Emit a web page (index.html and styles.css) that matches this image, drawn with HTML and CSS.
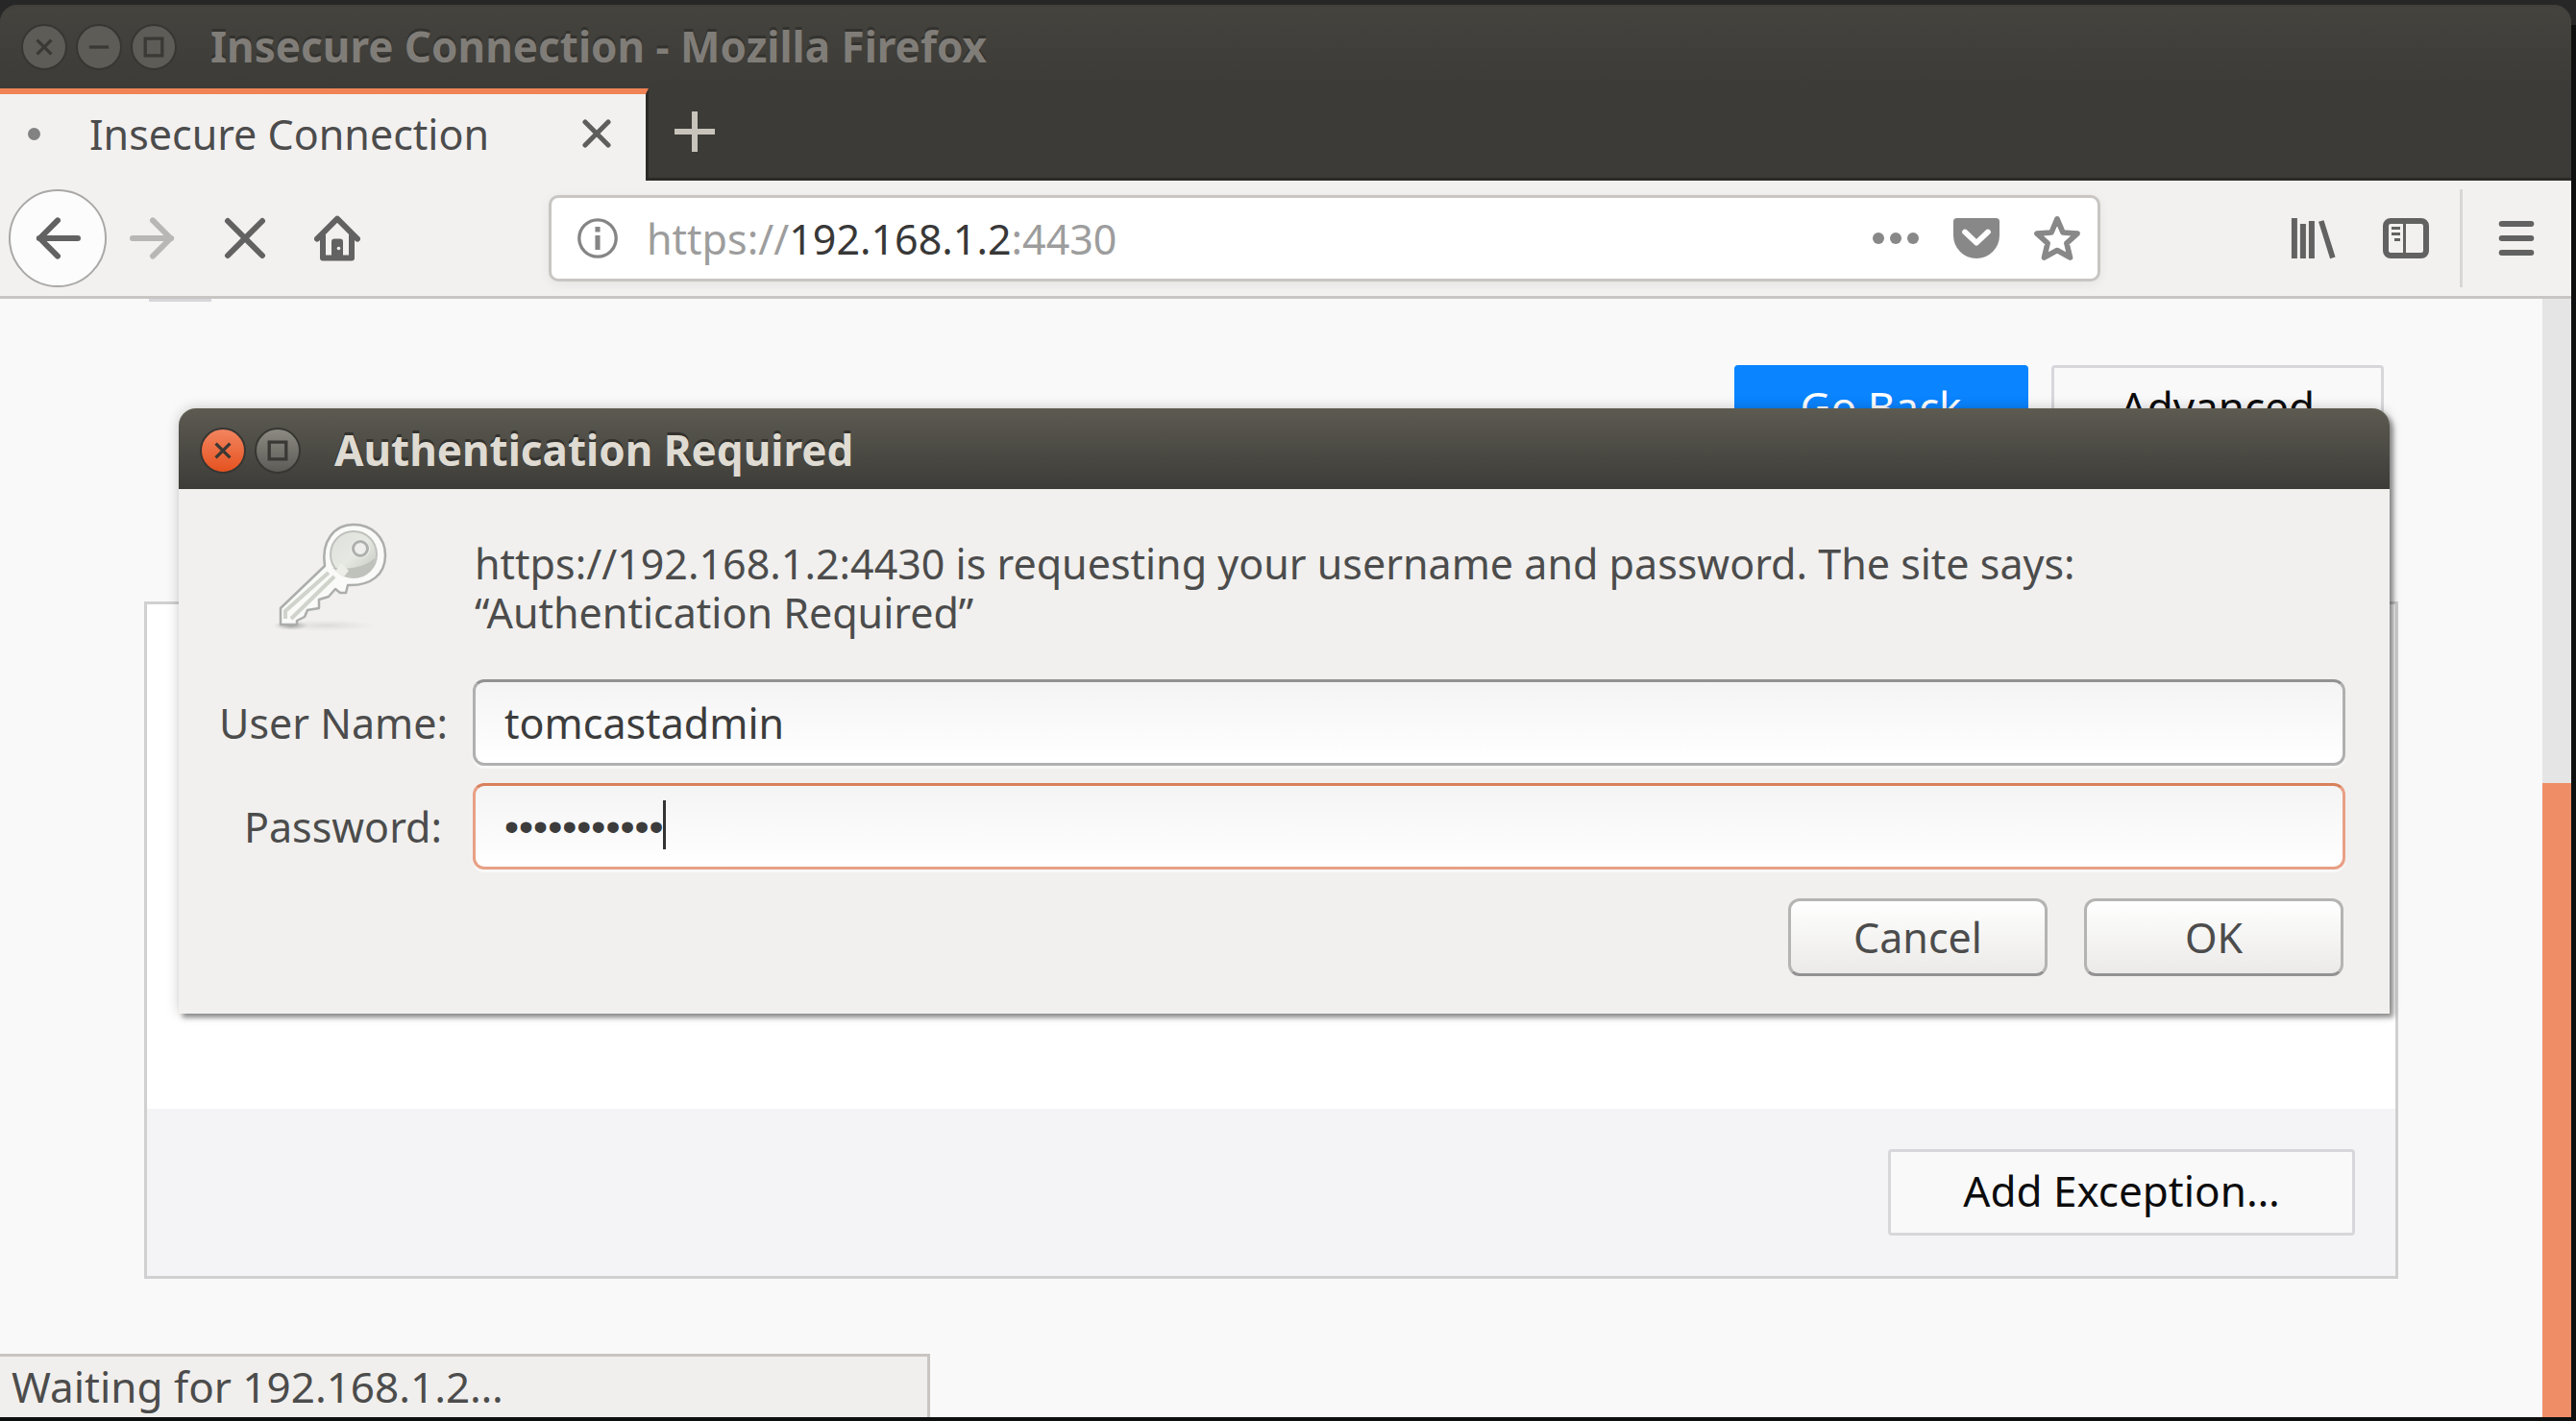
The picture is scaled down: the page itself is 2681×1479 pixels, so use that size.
FILE: index.html
```html
<!DOCTYPE html>
<html lang="en">
<head>
<meta charset="utf-8">
<title>Insecure Connection - Mozilla Firefox</title>
<link rel="stylesheet" href="styles.css">
</head>
<body>
<div class="browser">
  <header class="titlebar">
    <button class="win-btn" type="button" aria-label="Close window"><svg viewBox="0 0 16 16"><path d="M5.3 5.3l5.4 5.4M10.7 5.3l-5.4 5.4"/></svg></button>
    <button class="win-btn" type="button" aria-label="Minimize window"><svg viewBox="0 0 16 16"><path d="M4.3 8h7.4"/></svg></button>
    <button class="win-btn" type="button" aria-label="Maximize window"><svg viewBox="0 0 16 16"><path d="M4.8 4.8h6.4v6.4H4.8z"/></svg></button>
    <h1 class="window-title">Insecure Connection - Mozilla Firefox</h1>
  </header>

  <div class="tabs">
    <div class="tab">
      <span class="tab-busy"></span>
      <span class="tab-label">Insecure Connection</span>
      <button class="icon-btn" type="button" aria-label="Close tab"><svg class="i30" viewBox="0 0 10 10"><path d="M1 1l8 8M9 1L1 9" fill="none" stroke="#5e5e5d" stroke-width="1.7" stroke-linecap="round"/></svg></button>
    </div>
    <div class="tab-rest">
      <button class="icon-btn" type="button" aria-label="New tab"><svg class="i42" viewBox="0 0 14 14"><path d="M7 0v14M0 7h14" fill="none" stroke="#c8c4bb" stroke-width="2"/></svg></button>
    </div>
  </div>

  <nav class="toolbar">
    <button class="icon-btn back" type="button" aria-label="Back"><svg class="i48" viewBox="0 0 16 16"><path d="M15 8H1.6M8 1.8L1.8 8L8 14.2" class="line"/></svg></button>
    <button class="icon-btn forward" type="button" aria-label="Forward" disabled><svg class="i48" viewBox="0 0 16 16"><path d="M1 8h13.4M8 1.8L14.2 8L8 14.2" class="line"/></svg></button>
    <button class="icon-btn" type="button" aria-label="Stop"><svg class="i48" viewBox="0 0 16 16"><path d="M2 2l12 12M14 2L2 14" class="line"/></svg></button>
    <button class="icon-btn" type="button" aria-label="Home"><svg class="i48" viewBox="0 0 16 16"><path d="M1 8.2L8 1.2L15 8.2M3 7v7.8h10V7" class="line"/><path d="M6 15V9.2a1 1 0 0 1 1-1h2a1 1 0 0 1 1 1V15z" fill="#626262"/><circle cx="8.5" cy="11.5" r=".6" fill="#f2f1ef"/></svg></button>
    <div class="urlbar">
      <svg class="i42" viewBox="0 0 14 14"><circle cx="7" cy="7" r="6.4" fill="none" stroke="#858585" stroke-width="1.1"/><path d="M7 3v1.8M7 6v5" stroke="#858585" stroke-width="1.7"/></svg>
      <div class="url" role="textbox" aria-label="Address">https://<b>192.168.1.2</b>:4430</div>
      <button class="icon-btn" type="button" aria-label="Page actions"><svg class="i48" viewBox="0 0 16 16" fill="#888"><circle cx="2" cy="8" r="2"/><circle cx="8" cy="8" r="2"/><circle cx="14" cy="8" r="2"/></svg></button>
      <button class="icon-btn" type="button" aria-label="Save to Pocket"><svg class="i48" viewBox="0 0 16 16"><path d="M1.2 1h13.6a1.2 1.2 0 0 1 1.2 1.2V7a8 8 0 0 1-16 0V2.2a1.2 1.2 0 0 1 1.2-1.2z" fill="#888"/><path d="M4 5.8L8 9.6L12 5.8" fill="none" stroke="#fff" stroke-width="1.9" stroke-linecap="round" stroke-linejoin="round"/></svg></button>
      <button class="icon-btn" type="button" aria-label="Bookmark this page"><svg class="i48" viewBox="0 0 16 16"><path d="M8 1.3L10 6l5 .4-3.7 3.3 1.2 5L8 12.2l-4.5 2.5 1.2-5L1 6.400 6 6z" fill="none" stroke="#888" stroke-width="1.9" stroke-linejoin="round"/></svg></button>
    </div>
    <button class="icon-btn" type="button" aria-label="Library"><svg class="i48" viewBox="0 0 16 16"><path d="M1.3 1v14M4.3 3v12M7.3 2v13" stroke="#626262" stroke-width="2"/><path d="M10.6 2l4 12.8" stroke="#626262" stroke-width="1.9"/></svg></button>
    <button class="icon-btn" type="button" aria-label="Sidebars"><svg class="i48" viewBox="0 0 16 16"><rect x="1" y="2" width="14" height="12" rx="1.7" fill="none" stroke="#626262" stroke-width="2"/><path d="M7.5 2v12M3 4.5h3M3 6.5h3M4 8.5h2" stroke="#626262" stroke-width="1"/></svg></button>
    <span class="toolbar-rule"></span>
    <button class="icon-btn" type="button" aria-label="Open menu"><svg class="i48" viewBox="0 0 16 16"><path d="M2.9 3h10.2M2.9 8h10.2M2.9 13h10.2" stroke="#626262" stroke-width="2" stroke-linecap="round"/></svg></button>
  </nav>

  <div class="viewport">
    <main class="page">
      <div class="rule-end"></div>
      <div class="actions">
        <button class="page-btn primary" type="button">Go Back</button>
        <button class="page-btn" type="button">Advanced</button>
      </div>
      <section class="advanced">
        <div class="advanced-body"></div>
        <div class="advanced-foot"><button class="page-btn exception" type="button">Add Exception…</button></div>
      </section>
    </main>
    <div class="scrollbar"><div class="thumb"></div></div>
    <div class="status">Waiting for 192.168.1.2…</div>
  </div>

  <form class="dialog" role="dialog" aria-labelledby="dialog-title">
    <header class="dialog-bar">
      <button class="win-btn close" type="button" aria-label="Close dialog"><svg viewBox="0 0 16 16"><path d="M5.3 5.3l5.4 5.4M10.7 5.3l-5.4 5.4"/></svg></button>
      <button class="win-btn lit" type="button" aria-label="Maximize dialog"><svg viewBox="0 0 16 16"><path d="M4.8 4.8h6.4v6.4H4.8z"/></svg></button>
      <h2 class="window-title" id="dialog-title">Authentication Required</h2>
    </header>
    <div class="dialog-body">
      <svg class="key" viewBox="0 0 130 130">
        <defs>
          <linearGradient id="metal" x1="0" y1="0" x2="1" y2="1"><stop offset="0" stop-color="#dfe0dc"/><stop offset=".5" stop-color="#e6e8e2"/><stop offset="1" stop-color="#c2c5bd"/></linearGradient>
          <radialGradient id="ground"><stop offset="0" stop-color="#77787a" stop-opacity=".7"/><stop offset="1" stop-color="#999" stop-opacity="0"/></radialGradient>
        </defs>
        <ellipse cx="60" cy="116" rx="52" ry="6" fill="url(#ground)" opacity=".25"/>
        <ellipse cx="23" cy="116" rx="18" ry="5" fill="url(#ground)"/>
        <path d="M58 54C54 28 68 11 88 11c19 0 33 13 33 32 0 20-15 32-39 31l-2 8-6 0-5-4-7 8-10 3v9l-12 2-3 7-8 4v4H12V98z" fill="#fafaf8" stroke="#acaeab" stroke-width="2.5" stroke-linejoin="round"/>
        <circle cx="88" cy="42" r="24" fill="url(#metal)" stroke="#c0c2bd" stroke-width="2"/>
        <path d="M66 56c9 6 14 8 24 10 10-1 20-8 20-20-12 10-26 12-44 10z" fill="#bfc2ba"/>
        <path d="M62 61L17 101v8M68 65L23 109" fill="none" stroke="#d0d3cb" stroke-width="4"/>
        <path d="M75 51l8 8-5 6-9-5z" fill="#edeee8"/>
        <circle cx="95" cy="36" r="10" fill="#eeeeec"/>
        <circle cx="95" cy="36" r="7.5" fill="#eeeeec" stroke="#aeb0ad" stroke-width="3"/>
      </svg>
      <p class="message">https://192.168.1.2:4430 is requesting your username and password. The site says: “Authentication Required”</p>
      <label for="user">User Name:</label>
      <input class="field" id="user" type="text" value="tomcastadmin">
      <label for="pass">Password:</label>
      <div class="secret">
        <input class="field focused" id="pass" type="password" value="tomcastpass">
        <span class="caret"></span>
      </div>
      <div class="dialog-actions">
        <button class="dialog-btn" type="button">Cancel</button>
        <button class="dialog-btn" type="submit">OK</button>
      </div>
    </div>
  </form>
</div>
</body>
</html>
```
FILE: styles.css
```css
* { box-sizing: border-box; }

body {
  margin: 0;
  height: 100vh;
  padding: 5px 5px 4px 0;
  background: linear-gradient(#272727 0 26px, #0e1010 26px);
  font-family: "Noto Sans", sans-serif;
  font-size: 43px;
  line-height: 51px;
  color: #4c4c4c;
  overflow: hidden;
}

button, input { font: inherit; color: inherit; margin: 0; }
svg { display: block; flex: none; }
h1, h2, p { margin: 0; }

.browser {
  position: relative;
  height: 100%;
  display: flex;
  flex-direction: column;
  background: #3c3b37;
  border-radius: 18px 18px 0 0;
}

/* Window frame */
.titlebar, .dialog-bar {
  display: flex;
  align-items: center;
  gap: 9px;
  padding: 0 22px;
  border-radius: 18px 18px 0 0;
}
.titlebar {
  height: 87px;
  flex: none;
  padding-bottom: 3px;
  border-top: 3px solid #42413c;
  background: linear-gradient(#44433e, #3c3b37);
}
.window-title {
  margin-left: 26px;
  font-size: 44px;
  line-height: 51px;
  font-weight: 700;
  color: #807d78;
  text-shadow: 0 -3px 0 #33322e;
  white-space: nowrap;
}
.win-btn {
  width: 48px;
  height: 48px;
  padding: 0;
  border: 2px solid #373632;
  border-radius: 50%;
  background: #5e5c56;
  flex: none;
}
.win-btn svg { width: 100%; height: 100%; fill: none; stroke: #3a3935; stroke-width: 1.2; }

/* Tabs */
.tabs {
  flex: none;
  display: flex;
  height: 96px;
}
.tab {
  width: 675px;
  display: flex;
  align-items: center;
  padding: 0 36px 8px 29px;
  border-top: 6px solid #f08355;
  border-right: 3px solid #2b2a27;
  background: #f3f1f0;
}
.tab-busy { width: 13px; height: 13px; border-radius: 50%; background: #828282; }
.tab-label { flex: 1; margin-left: 51px; white-space: nowrap; }
.tab-rest {
  flex: 1;
  display: flex;
  align-items: center;
  padding: 0 27px 4px;
  border-bottom: 3px solid #2b2a27;
}

.icon-btn {
  display: flex;
  align-items: center;
  flex: none;
  padding: 0;
  border: 0;
  background: none;
}
.i30 { width: 30px; height: 30px; }
.i42 { width: 42px; height: 42px; }
.i48 { width: 48px; height: 48px; }
.line { fill: none; stroke: #626262; stroke-width: 2; stroke-linecap: round; stroke-linejoin: round; }

/* Navigation toolbar */
.toolbar {
  flex: none;
  height: 123px;
  display: flex;
  align-items: center;
  gap: 48px;
  padding: 0 33px 0 9px;
  background: #f2f1ef;
  border-bottom: 3px solid #c8c5c2;
}
.back {
  width: 102px;
  height: 102px;
  justify-content: center;
  border: 2px solid #a9a8a7;
  border-radius: 50%;
  background: #fcfcfc;
}
.forward { margin-left: -24px; opacity: .4; }
.urlbar {
  flex: 1;
  height: 90px;
  margin: 0 150px 0 148px;
  padding: 0 18px 0 27px;
  display: flex;
  align-items: center;
  gap: 36px;
  border: 3px solid #c8c5c2;
  border-radius: 10px;
  background: #fff;
  box-shadow: 0 3px 12px rgba(0, 0, 0, .06);
}
.url { flex: 1; margin-left: -6px; color: #9d9d9d; white-space: nowrap; }
.url b { font-weight: 400; color: #383838; }
.toolbar-rule { width: 3px; height: 102px; margin: 0 -16px; background: #d8d7d6; }

/* Page */
.viewport {
  position: relative;
  flex: 1;
  min-height: 0;
  display: flex;
  overflow: hidden;
  background: #f9f9f9;
}
.page { flex: 1; padding: 0 150px; }
.rule-end { width: 65px; height: 3px; margin-left: 5px; background: #d7d7db; }
.actions {
  display: flex;
  justify-content: flex-end;
  gap: 24px;
  padding: 66px 15px 156px;
}
.page-btn {
  height: 90px;
  padding: 0 69px 3px;
  border: 3px solid #d7d7db;
  border-radius: 4px;
  background: #f9f9fa;
  font-size: 44px;
  color: #0c0c0d;
}
.primary { padding: 0 66px 3px; border-color: #0a84ff; background: #0a84ff; color: #fff; }
.exception { min-width: 486px; }
.advanced { border: 3px solid #d0d0d1; background: #fff; }
.advanced-body { height: 525px; }
.advanced-foot {
  display: flex;
  justify-content: flex-end;
  padding: 42px;
  background: #f4f4f7;
}
.scrollbar {
  width: 30px;
  display: flex;
  padding-top: 504px;
  background: #e5e5e5;
}
.thumb { flex: 1; background: #ef8e66; }
.status {
  position: absolute;
  left: 0;
  bottom: 0;
  width: 968px;
  padding: 6px 12px;
  border: solid #c8c5c2;
  border-width: 3px 3px 0 0;
  background: #f1efed;
  font-size: 44px;
}

/* Authentication dialog floats over the browser window */
.dialog {
  position: absolute;
  top: 420px;
  left: 186px;
  right: 189px;
  border-radius: 18px 18px 0 0;
  background: #f1f0ee;
  box-shadow: 4px 4px 5px rgba(0, 0, 0, .4), 0 0 14px rgba(0, 0, 0, .2);
}
.dialog-bar {
  height: 84px;
  border-top: 3px solid #5d5b50;
  background: linear-gradient(#5b5950, #3d3c38);
}
.dialog-bar .window-title { color: #dfdbd2; }
.close { background: linear-gradient(#f38560, #e5521f); }
.lit { background: linear-gradient(#8c8a82, #5c5b56); }
.dialog-body {
  display: grid;
  grid-template-columns: 232px 1fr;
  gap: 18px 32px;
  align-items: center;
  padding: 26px 46px 39px 42px;
}
.key { width: 130px; height: 130px; margin: 0 0 24px 52px; }
.message { max-width: 1800px; padding-left: 2px; }
.dialog-body label { text-align: right; white-space: nowrap; }
.field {
  display: block;
  width: 100%;
  height: 90px;
  padding: 0 30px;
  border: 3px solid #b0b0b0;
  border-top-color: #929292;
  border-radius: 12px;
  outline: 0;
  background: linear-gradient(#f4f4f4, #fff);
  box-shadow: 0 3px 0 #f8f8f7;
  color: #3c3c3c;
}
.secret { position: relative; }
.focused {
  border-color: #e8a085;
  border-top-color: #d9805c;
  font-family: "Liberation Sans", sans-serif;
}
.caret {
  position: absolute;
  left: 198px;
  top: 18px;
  width: 3px;
  height: 51px;
  background: #333;
}
.dialog-actions {
  grid-column: 2;
  display: flex;
  justify-content: flex-end;
  gap: 38px;
  padding: 12px 2px 0 0;
}
.dialog-btn {
  width: 270px;
  height: 81px;
  padding: 0;
  border: 3px solid #b4b4b2;
  border-bottom-color: #929292;
  border-radius: 12px;
  background: linear-gradient(#fff, #ebeae8);
}
```
